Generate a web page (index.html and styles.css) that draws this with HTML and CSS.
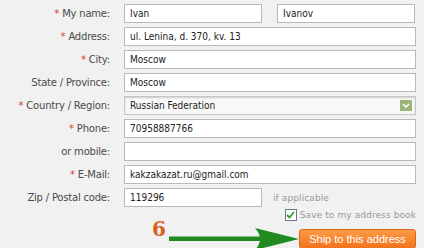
FILE: index.html
```html
<!DOCTYPE html>
<html>
  <head>
    <title>Shipping address</title>
    <link rel="stylesheet" href="styles.css">
  </head>
  <body>
    <form class="address-form" action="">
      <div class="row">
        <label class="label"><span class="req">*</span> My name:</label>
        <div class="fields">
          <input class="text half" type="text" value="Ivan">
          <input class="text half" type="text" value="Ivanov">
        </div>
      </div>
      <div class="row">
        <label class="label"><span class="req">*</span> Address:</label>
        <div class="fields"><input class="text" type="text" value="ul. Lenina, d. 370, kv. 13"></div>
      </div>
      <div class="row">
        <label class="label"><span class="req">*</span> City:</label>
        <div class="fields"><input class="text" type="text" value="Moscow"></div>
      </div>
      <div class="row">
        <label class="label">State / Province:</label>
        <div class="fields"><input class="text" type="text" value="Moscow"></div>
      </div>
      <div class="row">
        <label class="label"><span class="req">*</span> Country / Region:</label>
        <div class="fields">
          <div class="select">
            <span>Russian Federation</span>
            <span class="select-btn">
              <svg width="12" height="11" viewBox="0 0 12 11"><path d="M3 4 L6 7 L9 4" fill="none" stroke="#fff" stroke-width="1.6"/></svg>
            </span>
          </div>
        </div>
      </div>
      <div class="row">
        <label class="label"><span class="req">*</span> Phone:</label>
        <div class="fields"><input class="text" type="text" value="70958887766"></div>
      </div>
      <div class="row">
        <label class="label">or mobile:</label>
        <div class="fields"><input class="text" type="text" value=""></div>
      </div>
      <div class="row">
        <label class="label"><span class="req">*</span> E-Mail:</label>
        <div class="fields"><input class="text" type="text" value="kakzakazat.ru@gmail.com"></div>
      </div>
      <div class="row">
        <label class="label">Zip / Postal code:</label>
        <div class="fields">
          <input class="text half" type="text" value="119296">
          <span class="hint">if applicable</span>
        </div>
      </div>
      <div class="save">
        <span class="check">
          <svg width="9" height="8" viewBox="0 0 9 8"><path d="M1 4 L3.5 6.5 L8 1" fill="none" stroke="#2a9a2a" stroke-width="1.8"/></svg>
        </span>
        <span class="hint">Save to my address book</span>
      </div>
      <div class="submit">
        <span class="step">6</span>
        <svg class="arrow" width="130" height="24" viewBox="0 0 130 24">
          <rect x="0" y="9.5" width="92" height="4.5" fill="#1f8a1f"/>
          <path d="M86 1 L130 12 L86 23 Q96 12 86 1 Z" fill="#1f8a1f"/>
        </svg>
        <button class="ship" type="button">Ship to this address</button>
      </div>
    </form>
  </body>
</html>
```

FILE: styles.css
```css
body { margin: 0; background: #f1f1f1; font-family: "DejaVu Sans", Verdana, sans-serif; font-size: 10px; color: #444; }

.address-form { padding: 4px 8px 0 0; width: 416px; }

.row { display: flex; align-items: center; height: 19px; margin-bottom: 4px; }
.label { width: 110px; padding-right: 14px; text-align: right; font-size: 10px; letter-spacing: -0.2px; color: #4a4a4a; white-space: nowrap; }
.req { color: #d04040; }

.fields { display: flex; align-items: center; gap: 15px; flex: 1; }
.text { box-sizing: border-box; height: 19px; width: 100%; border: 1px solid #b9b9b9; background: #fff; padding: 0 5px; font-family: "DejaVu Sans Condensed", "DejaVu Sans", sans-serif; font-stretch: condensed; font-size: 10px; color: #222; }
.text.half { width: 138px; flex: none; }

.select { box-sizing: border-box; height: 19px; width: 100%; border: 1px solid #c6c6c6; background: #f8f8f8; box-shadow: inset 0 1px 2px #ccc; display: flex; align-items: center; justify-content: space-between; padding: 0 3px 0 5px; font-family: "DejaVu Sans Condensed", "DejaVu Sans", sans-serif; font-stretch: condensed; font-size: 10px; color: #222; }
.select-btn { width: 12px; height: 11px; background: #9cb47a; display: flex; }

.hint { color: #999; font-size: 9px; letter-spacing: 0.1px; }
.fields .hint { margin-left: -4px; }

.save { display: flex; align-items: center; justify-content: flex-end; gap: 3px; height: 12px; margin-top: -2px; }
.check { box-sizing: border-box; width: 12px; height: 12px; border: 1px solid #6a7a8a; background: #fff; display: flex; align-items: center; justify-content: center; }

.submit { display: flex; align-items: center; justify-content: flex-end; margin-top: 6px; }
.step { font-family: "DejaVu Serif", serif; font-weight: bold; font-size: 20px; line-height: 20px; color: #d9601e; margin-right: 3px; align-self: flex-start; margin-top: -8px; }
.arrow { display: block; }
.ship { box-sizing: border-box; width: 117px; height: 20px; border: 1px solid #e0661a; border-radius: 3px; background: linear-gradient(#ff9a45, #f2731c); color: #fff; font-family: "Liberation Sans", Arial, sans-serif; font-size: 11px; padding: 0; }
```
